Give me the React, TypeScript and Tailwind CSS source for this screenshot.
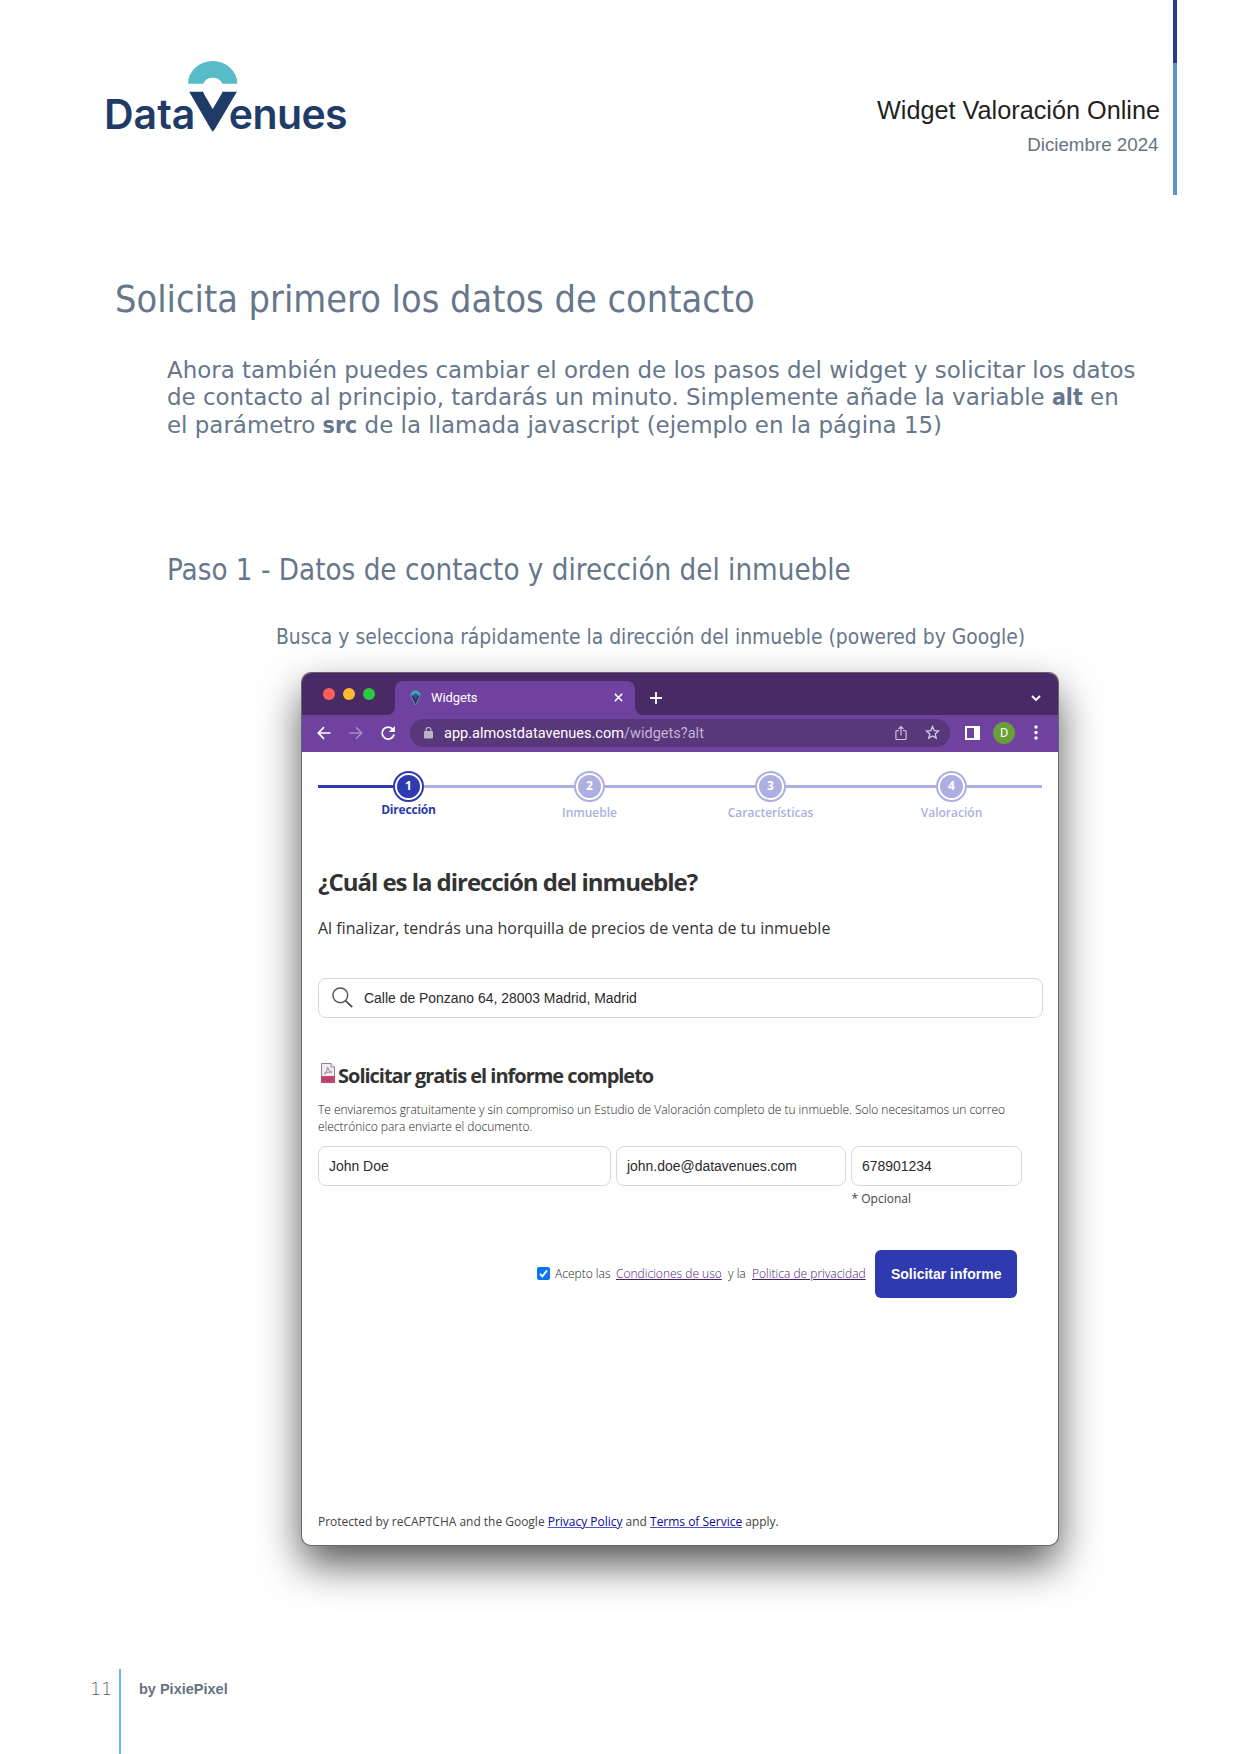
import type { ReactNode } from "react";

function Logo() {
  return (
    <div className="relative ml-[106px] mt-[61px] flex h-[76px] w-[241px] text-[41px] font-semibold leading-[50px] text-[#1f3c68] font-['Inter']">
      <span className="-ml-[2px] mt-[28px] w-[127px] tracking-[0px]">Data</span>
      <svg className="absolute left-[82px] top-0" width="50" height="72" viewBox="0 0 50 72">
        <path d="M0 22.7A24.7 22.7 0 0 1 49.4 22.7H34.3A10.2 9.4 0 0 0 15.3 22.7Z" fill="#58bcc8" />
        <path d="M1.2 30.7H15.2A10.4 10.4 0 0 0 16.3 33.5L24.7 48L33.2 33.5A10.4 10.4 0 0 0 34.4 30.7H48.9L27.2 67.5L24.8 70.8L22.5 67.5Z" fill="#1f3c68" />
      </svg>
      <span className="-ml-[1px] mt-[28px] tracking-[-0.6px]">enues</span>
    </div>
  );
}

function PinIcon() {
  return (
    <svg width="11" height="16" viewBox="0 0 11 16">
      <path d="M0.5 5.5A5 5 0 0 1 10.5 5.5Z" fill="#35a9c9" />
      <path d="M0.5 5.5H10.5L5.5 15.5Z" fill="#23365c" />
      <path d="M0.6 5L5.3 15M10.4 5L5.7 15" stroke="#5e9fb8" strokeWidth="0.9" fill="none" />
      <path d="M3.3 5.5A2.2 2.2 0 0 1 7.7 5.5L5.5 10Z" fill="#5a4590" />
    </svg>
  );
}

function TitleBar() {
  return (
    <div className="flex h-[42px] bg-[#492a66]">
      <div className="flex w-[93px] gap-[8px] pl-[21px] pt-[15px]">
        <i className="size-3 rounded-full bg-[#fe5f57]" />
        <i className="size-3 rounded-full bg-[#febc2e]" />
        <i className="size-3 rounded-full bg-[#28c840]" />
      </div>
      <div className="relative mt-2 flex w-[239.5px] items-center rounded-t-[8px] bg-[#7042a0] pl-[15px] text-[13px] text-white font-['Roboto',sans-serif]">
        <svg className="absolute -left-[8px] bottom-0" width="8" height="8" viewBox="0 0 8 8"><path d="M8 0V8H0A8 8 0 0 0 8 0Z" fill="#7042a0" /></svg>
        <svg className="absolute -right-[8px] bottom-0" width="8" height="8" viewBox="0 0 8 8"><path d="M0 0V8H8A8 8 0 0 1 0 0Z" fill="#7042a0" /></svg>
        <PinIcon />
        <span className="ml-[10px] leading-4 tracking-[-0.1px]">Widgets</span>
        <svg className="ml-auto mr-[12px]" width="9" height="9" viewBox="0 0 9 9"><path d="M0.8 0.8L8.2 8.2M8.2 0.8L0.8 8.2" stroke="#fff" strokeWidth="1.6" /></svg>
      </div>
      <svg className="ml-[15.5px] mt-[19px]" width="12" height="12" viewBox="0 0 12 12"><path d="M6 0V12M0 6H12" stroke="#fff" strokeWidth="1.8" /></svg>
      <svg className="ml-auto mr-[17px] mt-[22px]" width="10" height="7" viewBox="0 0 10 7"><path d="M1 1L5 5L9 1" stroke="#fff" strokeWidth="1.8" fill="none" /></svg>
    </div>
  );
}

function ToolBar() {
  return (
    <div className="flex h-[37px] items-center bg-[#7042a0] pb-px">
      <svg className="ml-[15px]" width="14" height="14" viewBox="0 0 14 14" fill="none" stroke="#fff" strokeWidth="1.7"><path d="M13.5 7H1.5M7 1.2L1.3 7L7 12.8" /></svg>
      <svg className="ml-[18px]" width="14" height="14" viewBox="0 0 14 14" fill="none" stroke="#a98bc8" strokeWidth="1.5"><path d="M0.5 7H12.5M7 1.2L12.7 7L7 12.8" /></svg>
      <svg className="ml-[17px]" width="16" height="16" viewBox="0 0 16 16" fill="none" stroke="#fff" strokeWidth="1.8"><path d="M12.9 4.4A6 6 0 1 0 14 9.5" /><path d="M14.9 0.9V7.1H8.7Z" fill="#fff" stroke="none" /></svg>
      <div className="ml-[14px] flex h-[28px] w-[540px] items-center rounded-full bg-[#59377b] font-['Roboto',sans-serif]">
        <svg className="ml-[14px]" width="9" height="12" viewBox="0 0 9 12"><rect y="4" width="9" height="7.5" rx="1" fill="#b9b3c4" /><path d="M2 4.5V3A2.5 2.5 0 0 1 7 3V4.5" stroke="#b9b3c4" strokeWidth="1.2" fill="none" /></svg>
        <span className="ml-[11px] whitespace-nowrap pt-[2px] text-[14.55px] leading-5 text-white">app.almostdatavenues.com<span className="text-[#c3b1d6]">/widgets?alt</span></span>
        <svg className="ml-auto mr-[18px]" width="12" height="16" viewBox="0 0 12 16" fill="none" stroke="#cdbfdc" strokeWidth="1.2"><path d="M3.8 5.6H1.8Q0.9 5.6 0.9 6.5V13.6Q0.9 14.5 1.8 14.5H10.2Q11.1 14.5 11.1 13.6V6.5Q11.1 5.6 10.2 5.6H8.2M6 10.5V1.6M3.5 4L6 1.5L8.5 4" /></svg>
        <svg className="mr-[10px]" width="15" height="15" viewBox="0 0 15 15" fill="none" stroke="#d6cae3" strokeWidth="1.3"><path d="M7.5 1.6L9.2 5.6L13.5 6L10.2 8.9L11.2 13.1L7.5 10.9L3.8 13.1L4.8 8.9L1.5 6L5.8 5.6Z" /></svg>
      </div>
      <svg className="ml-[15px]" width="15" height="14" viewBox="0 0 15 14"><path d="M0 0H15V14H0ZM2 2V12H9V2Z" fill="#fff" fillRule="evenodd" /></svg>
      <div className="ml-[13px] flex size-[22px] items-center justify-center rounded-full bg-[#689f38] text-[12.5px] text-white font-['Roboto',sans-serif]">D</div>
      <svg className="ml-[19px]" width="4" height="15" viewBox="0 0 4 15" fill="#fff"><circle cx="2" cy="2" r="1.7" /><circle cx="2" cy="7.5" r="1.7" /><circle cx="2" cy="13" r="1.7" /></svg>
    </div>
  );
}

const steps = ["Dirección", "Inmueble", "Características", "Valoración"];

function Stepper() {
  return (
    <div className="grid h-[113px] w-[724px] grid-cols-4 content-start pt-[19px]">
      {steps.map((label, i) => {
        const on = i === 0;
        const line = "h-[3px] flex-1 ";
        return (
          <div key={label}>
            <div className="flex items-center">
              <div className={line + (on ? "bg-[#2f39b0]" : "bg-[#acafdf]")} />
              <div className={"flex size-[31px] items-center justify-center rounded-full border-2 bg-white " + (on ? "border-[#2f39b0]" : "border-[#acafdf]")}>
                <div className={"flex size-[23px] items-center justify-center rounded-full text-[12px] font-bold leading-none text-white " + (on ? "bg-[#2f39b0]" : "bg-[#acafdf]")}>{i + 1}</div>
              </div>
              <div className={line + "bg-[#acafdf]"} />
            </div>
            <div className={"text-center text-[12px] leading-4 " + (on ? "mt-[0.5px] font-bold tracking-[-0.2px] text-[#2f39b0]" : "mt-[3.5px] font-semibold text-[#acafdf]")}>{label}</div>
          </div>
        );
      })}
    </div>
  );
}

function Field({ className, children }: { className: string; children: ReactNode }) {
  return (
    <div className={"flex items-center rounded-[8px] border border-[#d8d8d8] text-[13.95px] text-[#2b2b2b] font-['Liberation_Sans',sans-serif] " + className}>
      {children}
    </div>
  );
}

function PdfIcon() {
  return (
    <svg className="ml-[3px] mt-[1.5px]" width="14" height="20" viewBox="0 0 14 20">
      <path d="M0.5 0.5H10L13.5 4V13.5H0.5Z" fill="#f1ece8" stroke="#8a80ac" />
      <path d="M10 0.5V4H13.5" fill="#fff" stroke="#8a80ac" />
      <path d="M3 11Q7 8.5 6.5 4Q7.5 8.5 11 9.2Q7 8.3 3 11Z" fill="none" stroke="#9487b5" strokeWidth="1" />
      <rect y="13" width="14" height="7" fill="#c8466f" />
      <path d="M2.5 18V15H4.5V16.5H2.5M6 15V18H8V15ZM10 18V15H12M10 16.5H11.5" fill="none" stroke="#9a3f68" strokeWidth="0.7" />
    </svg>
  );
}

function Widget() {
  return (
    <div className="h-[793px] px-4 text-[12px] leading-4 font-['Open_Sans',sans-serif]">
      <Stepper />
      <h3 className="pt-[0.7px] text-[24px] font-bold leading-8 tracking-[-1.03px] text-[#333]">¿Cuál es la dirección del inmueble?</h3>
      <p className="mt-[18.1px] text-[15.97px] leading-6 text-[#333]">Al finalizar, tendrás una horquilla de precios de venta de tu inmueble</p>
      <Field className="mt-[38.2px] h-[40px] w-[724.5px]">
        <svg className="ml-[12.5px] mr-[11.5px]" width="21" height="21" viewBox="0 0 21 21" fill="none" stroke="#555" strokeWidth="1.5"><circle cx="8.3" cy="8.3" r="7.4" /><path d="M13.4 13.6L20.2 20" strokeWidth="1.9" /></svg>
        Calle de Ponzano 64, 28003 Madrid, Madrid
      </Field>
      <div className="mt-[43.2px] flex h-7">
        <PdfIcon />
        <h4 className="ml-[3px] whitespace-nowrap pt-px text-[20px] font-bold leading-7 tracking-[-1.01px] text-[#333]">Solicitar gratis el informe completo</h4>
      </div>
      <p className="mt-[11.7px] whitespace-nowrap text-[11.97px] font-light leading-[17px] text-[#222]">
        Te enviaremos gratuitamente y sin compromiso un Estudio de Valoración completo de tu inmueble. Solo necesitamos un correo<br />electrónico para enviarte el documento.
      </p>
      <div className="mt-[11px] flex gap-[5px]">
        <Field className="h-10 w-[293px] pl-[10px]">John Doe</Field>
        <Field className="h-10 w-[230px] pl-[10px]">john.doe@datavenues.com</Field>
        <Field className="h-10 w-[171px] pl-[10px]">678901234</Field>
      </div>
      <p className="ml-[533.5px] mt-[5px] text-[#444]">* Opcional</p>
      <div className="mt-[42.5px] flex h-[48px] items-center pl-[219px] pt-px font-light text-[#222]">
        <svg width="13" height="13" viewBox="0 0 13 13"><rect width="13" height="13" rx="2" fill="#0b76ef" /><path d="M3 6.8L5.4 9.4L10 3.4" stroke="#fff" strokeWidth="1.9" fill="none" /></svg>
        <span className="ml-[5px] w-[61px] pt-px">Acepto las</span>
        <a className="w-[112px] pt-px text-[#4d1a75] underline">Condiciones de uso</a>
        <span className="w-[24px] pt-px">y la</span>
        <a className="whitespace-nowrap pt-px text-[#4d1a75] underline">Politica de privacidad</a>
        <button className="ml-[9.5px] h-[48px] w-[142px] shrink-0 rounded-[6px] bg-[#2f39b0] text-[14px] font-bold text-white font-['Liberation_Sans',sans-serif]">Solicitar informe</button>
      </div>
      <p className="mt-[216.5px] text-[11.97px] text-[#444]">
        Protected by reCAPTCHA and the Google <a className="text-[#0a0a9c] underline decoration-[#4a55d0]">Privacy Policy</a> and <a className="text-[#0a0a9c] underline decoration-[#4a55d0]">Terms of Service</a> apply.
      </p>
    </div>
  );
}

export default function App() {
  return (
    <div className="flex h-[1754px] w-[1241px] flex-col overflow-hidden bg-white text-[#66778c] font-['DejaVu_Sans',sans-serif]">
      <header className="flex h-[277px] items-start">
        <Logo />
        <div className="ml-auto pt-[95.3px] text-right font-['Liberation_Sans',sans-serif]">
          <div className="text-[25.25px] leading-[30px] text-[#231f20]">Widget Valoración Online</div>
          <div className="mr-[1.5px] mt-[8.3px] text-[18.75px] leading-[22px] text-[#687480]">Diciembre 2024</div>
        </div>
        <div className="ml-[13px] mr-[64px] h-[195px] w-1 bg-[#5b95d1]"><div className="h-[63px] bg-[#2b3990]" /></div>
      </header>
      <h1 className="ml-[115px] text-[37.6px] leading-[44px] font-['DejaVu_Sans_Condensed']">Solicita primero los datos de contacto</h1>
      <p className="ml-[167px] mt-[35.6px] whitespace-nowrap text-[22.95px] leading-[27.5px]">
        Ahora también puedes cambiar el orden de los pasos del widget y solicitar los datos<br />
        de contacto al principio, tardarás un minuto. Simplemente añade la variable <b className="font-['DejaVu_Sans_Condensed']">alt</b> en<br />
        el parámetro <b className="font-['DejaVu_Sans_Condensed']">src</b> de la llamada javascript (ejemplo en la página 15)
      </p>
      <h2 className="ml-[167px] mt-[114px] text-[29.25px] leading-[34px] font-['DejaVu_Sans_Condensed']">Paso 1 - Datos de contacto y dirección del inmueble</h2>
      <p className="ml-[276px] mt-[38px] text-[20.87px] leading-6 font-['DejaVu_Sans_Condensed']">Busca y selecciona rápidamente la dirección del inmueble (powered by Google)</p>
      <main className="ml-[302px] mt-[23.9px] h-[872px] w-[756px] shrink-0 rounded-[9px] bg-white shadow-[0_0_0_1px_#666,0_19px_42px_rgba(0,0,0,0.68)]">
        <div className="overflow-hidden rounded-[9px]">
          <TitleBar />
          <ToolBar />
          <Widget />
        </div>
      </main>
      <footer className="mt-auto flex h-[85.5px] shrink-0">
        <div className="w-[119px] pr-[7px] pt-[8.5px] text-right text-[17px] font-extralight leading-6 text-[#4b5865]">11</div>
        <div className="w-[2px] bg-[#62bcd4]" />
        <div className="pl-[18px] pt-[8.5px] text-[14.5px] font-bold leading-6 text-[#66727f] font-['Liberation_Sans',sans-serif]">by PixiePixel</div>
      </footer>
    </div>
  );
}
